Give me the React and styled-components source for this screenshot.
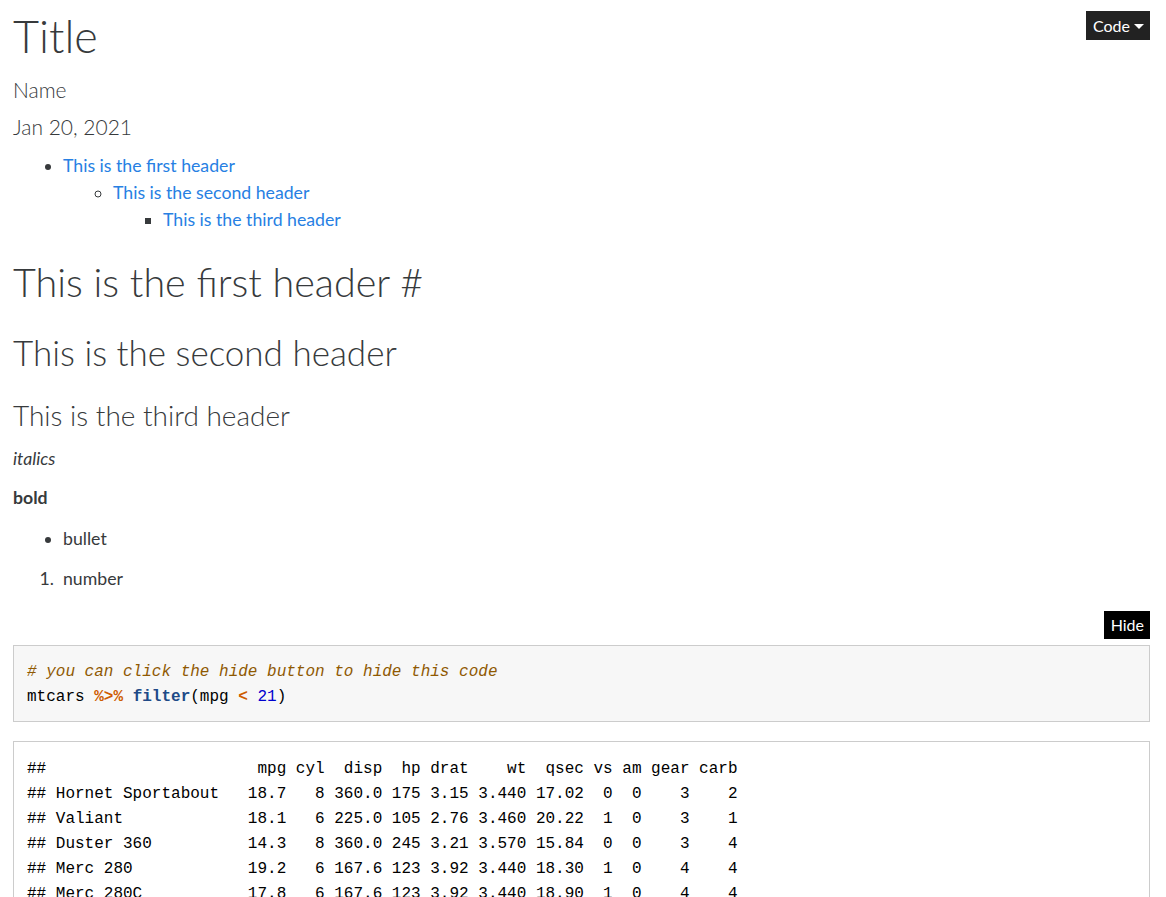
import React from "react";
import styled, { createGlobalStyle } from "styled-components";

const GlobalStyle = createGlobalStyle`
  body {
    margin: 0;
    background: #fff;
    color: #373a3c;
    font-family: Lato, "Noto Sans", sans-serif;
    font-size: 17.7px;
    line-height: 27px;
  }
`;

const Page = styled.div`
  padding: 0 16px 0 13px;
`;

const Header = styled.div`
  display: flex;
  justify-content: space-between;
  align-items: flex-start;
`;

const TitleBlock = styled.div`
  display: flex;
  flex-direction: column;
`;

const Title = styled.h1`
  margin: 9px 0 0;
  font-size: 45px;
  line-height: 54px;
  font-weight: 300;
`;

const Meta = styled.h4`
  margin: ${(p) => p.$top}px 0 0;
  font-size: 21px;
  line-height: 26px;
  font-weight: 300;
`;

const DarkButton = styled.button`
  display: flex;
  align-items: center;
  gap: 4px;
  margin-top: ${(p) => p.$top || 0}px;
  border: 0;
  border-radius: 0;
  padding: 0 6px 0 7px;
  height: ${(p) => p.$height}px;
  background: ${(p) => p.$bg};
  color: #fff;
  font-family: Lato, "Noto Sans", sans-serif;
  font-size: 16px;
  cursor: pointer;
`;

const Caret = styled.span`
  width: 0;
  height: 0;
  border-left: 5px solid transparent;
  border-right: 5px solid transparent;
  border-top: 5px solid #fff;
  margin-top: 2px;
`;

const Toc = styled.ul`
  margin: ${(p) => p.$top || 0}px 0 0;
  padding-left: 50px;
  list-style: ${(p) => p.$marker};
`;

const TocLink = styled.a`
  color: #2780e3;
  text-decoration: none;
`;

const H1 = styled.h1`
  margin: 22px 0 0;
  font-size: 39.5px;
  line-height: 54px;
  font-weight: 300;
`;

const Anchor = styled.span`
  margin-left: 10px;
`;

const H2 = styled.h2`
  margin: 21px 0 0;
  font-size: 35px;
  line-height: 44px;
  font-weight: 300;
`;

const H3 = styled.h3`
  margin: 23px 0 0;
  font-size: 28px;
  line-height: 36px;
  font-weight: 300;
`;

const Para = styled.p`
  margin: ${(p) => p.$top}px 0 0;
`;

const List = styled.ul`
  margin: ${(p) => p.$top}px 0 0;
  padding-left: 50px;
`;

const NumList = styled.ol`
  margin: ${(p) => p.$top}px 0 0;
  padding-left: 50px;

  li::marker {
    content: "1.  ";
  }
`;

const ButtonRow = styled.div`
  display: flex;
  justify-content: flex-end;
  margin-top: 18.5px;
`;

const Pre = styled.pre`
  margin: ${(p) => p.$top}px 0 0;
  padding: ${(p) => (p.$source ? "14px 12px 11px 13px" : "15px 12px 10px 13px")};
  border: 1px solid #ccc;
  background: ${(p) => (p.$source ? "#f7f7f7" : "#fff")};
  color: #000;
  font-family: "Liberation Mono", "DejaVu Sans Mono", monospace;
  font-size: 16px;
  line-height: 25px;
  white-space: pre;
  overflow: hidden;
`;

const Comment = styled.span`
  color: #8f5902;
  font-style: italic;
`;

const Op = styled.span`
  color: #ce5c00;
  font-weight: bold;
`;

const Fn = styled.span`
  color: #204a87;
  font-weight: bold;
`;

const Num = styled.span`
  color: #0000cf;
`;

const rows = [
  ["Hornet Sportabout", "18.7", "8", "360.0", "175", "3.15", "3.440", "17.02", "0", "0", "3", "2"],
  ["Valiant", "18.1", "6", "225.0", "105", "2.76", "3.460", "20.22", "1", "0", "3", "1"],
  ["Duster 360", "14.3", "8", "360.0", "245", "3.21", "3.570", "15.84", "0", "0", "3", "4"],
  ["Merc 280", "19.2", "6", "167.6", "123", "3.92", "3.440", "18.30", "1", "0", "4", "4"],
  ["Merc 280C", "17.8", "6", "167.6", "123", "3.92", "3.440", "18.90", "1", "0", "4", "4"],
  ["Merc 450SE", "16.4", "8", "275.8", "180", "3.07", "4.070", "17.40", "0", "0", "3", "3"],
  ["Merc 450SL", "17.3", "8", "275.8", "180", "3.07", "3.730", "17.60", "0", "0", "3", "3"],
  ["Merc 450SLC", "15.2", "8", "275.8", "180", "3.07", "3.780", "18.00", "0", "0", "3", "3"],
  ["Cadillac Fleetwood", "10.4", "8", "472.0", "205", "2.93", "5.250", "17.98", "0", "0", "3", "4"],
  ["Lincoln Continental", "10.4", "8", "460.0", "215", "3.00", "5.424", "17.82", "0", "0", "3", "4"],
  ["Chrysler Imperial", "14.7", "8", "440.0", "230", "3.23", "5.345", "17.42", "0", "0", "3", "4"],
  ["Dodge Challenger", "15.5", "8", "318.0", "150", "2.76", "3.520", "16.87", "0", "0", "3", "2"],
  ["AMC Javelin", "15.2", "8", "304.0", "150", "3.15", "3.435", "17.30", "0", "0", "3", "2"],
  ["Camaro Z28", "13.3", "8", "350.0", "245", "3.73", "3.840", "15.41", "0", "0", "3", "4"],
  ["Pontiac Firebird", "19.2", "8", "400.0", "175", "3.08", "3.845", "17.05", "0", "0", "3", "2"],
  ["Ford Pantera L", "15.8", "8", "351.0", "264", "4.22", "3.170", "14.50", "0", "1", "5", "4"],
  ["Ferrari Dino", "19.7", "6", "145.0", "175", "3.62", "2.770", "15.50", "0", "1", "5", "6"],
  ["Maserati Bora", "15.0", "8", "301.0", "335", "3.54", "3.570", "14.60", "0", "1", "5", "8"],
];

const cols = ["mpg", "cyl", "disp", "hp", "drat", "wt", "qsec", "vs", "am", "gear", "carb"];
const widths = [4, 3, 5, 3, 4, 5, 5, 2, 2, 4, 4];

const formatRow = (name, values) =>
  "## " + name.padEnd(19) + values.map((v, i) => " " + v.padStart(widths[i])).join("");

const output = [formatRow("", cols), ...rows.map((r) => formatRow(r[0], r.slice(1)))].join("\n");

export default function App() {
  return (
    <Page>
      <GlobalStyle />
      <Header>
        <TitleBlock>
          <Title>Title</Title>
          <Meta $top={14}>Name</Meta>
          <Meta $top={11}>Jan 20, 2021</Meta>
        </TitleBlock>
        <DarkButton $bg="#222" $height={29} $top={11}>
          Code <Caret />
        </DarkButton>
      </Header>

      <Toc $top={12} $marker="disc">
        <li>
          <TocLink href="#first">This is the first header</TocLink>
          <Toc $marker="circle">
            <li>
              <TocLink href="#second">This is the second header</TocLink>
              <Toc $marker="square">
                <li>
                  <TocLink href="#third">This is the third header</TocLink>
                </li>
              </Toc>
            </li>
          </Toc>
        </li>
      </Toc>

      <H1 id="first">
        This is the first header<Anchor>#</Anchor>
      </H1>
      <H2 id="second">This is the second header</H2>
      <H3 id="third">This is the third header</H3>

      <Para $top={12}>
        <em>italics</em>
      </Para>
      <Para $top={12}>
        <strong>bold</strong>
      </Para>
      <List $top={14}>
        <li>bullet</li>
      </List>
      <NumList $top={13}>
        <li>number</li>
      </NumList>

      <ButtonRow>
        <DarkButton $bg="#000" $height={28}>
          Hide
        </DarkButton>
      </ButtonRow>
      <Pre $top={6} $source>
        <Comment># you can click the hide button to hide this code</Comment>
        {"\nmtcars "}
        <Op>%&gt;%</Op> <Fn>filter</Fn>(mpg <Op>&lt;</Op> <Num>21</Num>)
      </Pre>
      <Pre $top={19}>{output}</Pre>
    </Page>
  );
}
